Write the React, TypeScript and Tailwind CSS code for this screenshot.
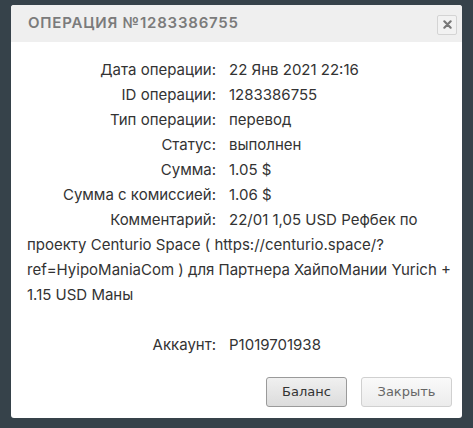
const rows: [string, string][] = [
  ['Дата операции:', '22 Янв 2021 22:16'],
  ['ID операции:', '1283386755'],
  ['Тип операции:', 'перевод'],
  ['Статус:', 'выполнен'],
  ['Сумма:', '1.05 $'],
  ['Сумма с комиссией:', '1.06 $'],
  [
    'Комментарий:',
    '22/01 1,05 USD Рефбек по проекту Centurio Space ( https://centurio.space/?ref=HyipoManiaCom ) для Партнера ХайпоМании Yurich + 1.15 USD Маны',
  ],
];

function Row({ label, value }: { label: string; value: string }) {
  return (
    <div className="break-words">
      <span className="inline-block w-[202px] pr-[13px] text-right">{label}</span>
      <span>{value}</span>
    </div>
  );
}

export default function App() {
  return (
    <div className="h-[428px] w-[473px] bg-[#36424a] pt-[5px] pl-[11px]">
      <div className="w-[451px] h-[413px] bg-white rounded-[3px] overflow-hidden flex flex-col">
        <div className="h-[37px] bg-[#efefef] flex items-center justify-between pl-[17px] pr-[5px]">
          <h2 className="text-[15px] font-semibold tracking-[0.8px] text-[#7b7b7b] font-['Inter',sans-serif]">
            ОПЕРАЦИЯ №1283386755
          </h2>
          <button className="mt-[2px] w-[20px] h-[20px] border border-[#d4d4d4] rounded-[2px] bg-[#f2f2f2] flex items-center justify-center text-[#777]">
            <svg width="9" height="9" viewBox="0 0 10 10">
              <path d="M1.5 1.5 L8.5 8.5 M8.5 1.5 L1.5 8.5" stroke="currentColor" strokeWidth="2.4" strokeLinecap="round" />
            </svg>
          </button>
        </div>
        <div className="pl-[16px] pr-[4px] pt-[15px] text-[15px] leading-[25px] text-[#333] font-['Inter',sans-serif]">
          {rows.map(([l, v]) => (
            <Row key={l} label={l} value={v} />
          ))}
          <div className="h-[25px]" />
          <Row label="Аккаунт:" value="P1019701938" />
        </div>
        <div className="mt-auto mb-[11px] flex justify-end gap-[14px] pr-[10px] font-['DejaVu_Sans',sans-serif] text-[13px]">
          <button className="h-[30px] w-[81px] rounded-[3px] border border-[#9a9a9a] bg-gradient-to-b from-[#f0f0f0] to-[#dcdcdc] text-[#333]">
            Баланс
          </button>
          <button className="h-[30px] w-[91px] rounded-[3px] border border-[#d0d0d0] bg-gradient-to-b from-[#fafafa] to-[#ececec] text-[#666]">
            Закрыть
          </button>
        </div>
      </div>
    </div>
  );
}
